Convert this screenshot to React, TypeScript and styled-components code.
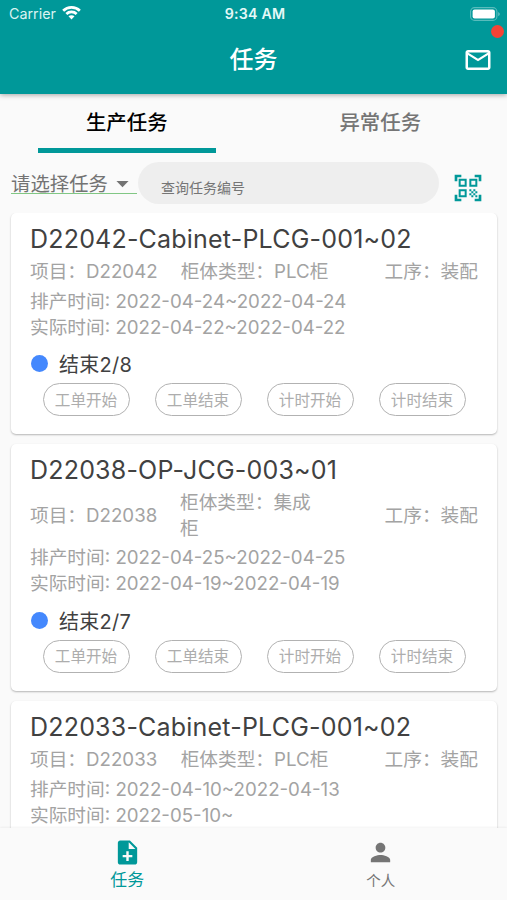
import React from "react";
import styled, { createGlobalStyle } from "styled-components";
import {
  MdArrowDropDown,
  MdMailOutline,
  MdNoteAdd,
  MdPerson,
  MdQrCodeScanner,
} from "react-icons/md";

const teal = "#009899";

const GlobalStyle = createGlobalStyle`
  * { box-sizing: border-box; }
  body {
    margin: 0;
    background: #fafafa;
    font-family: Inter, "Noto Sans CJK SC", sans-serif;
    color: #414141;
  }
  svg { display: block; flex: none; }
`;

const Screen = styled.div`
  width: 507px;
  height: 900px;
  display: flex;
  flex-direction: column;
  overflow: hidden;
  background: #fafafa;
  white-space: nowrap;
`;

const Header = styled.header`
  flex: none;
  height: 94px;
  background: ${teal};
  color: #fff;
  box-shadow: 0 1px 5px rgba(0, 0, 0, 0.35);
  z-index: 1;
`;

const StatusBar = styled.div`
  height: 27px;
  display: grid;
  grid-template-columns: 1fr auto 1fr;
  align-items: center;
  padding: 0 6px 0 9px;
`;

const Carrier = styled.div`
  display: flex;
  align-items: center;
  gap: 6px;
  font-size: 14.3px;
  color: #d9f3f2;
  svg { margin-bottom: 2px; }
`;

const Clock = styled.div`
  font-size: 14.2px;
  font-weight: 600;
  letter-spacing: 0.2px;
  color: #e4f8f7;
`;

const BatterySlot = styled.div`
  display: flex;
  justify-content: flex-end;
`;

const AppBar = styled.div`
  height: 65px;
  display: grid;
  grid-template-columns: 1fr auto 1fr;
  align-items: center;
  padding: 0 14px;
`;

const AppTitle = styled.h1`
  grid-column: 2;
  margin: 0;
  font-size: 24px;
  line-height: 36px;
  font-weight: 500;
`;

const MailButton = styled.button`
  position: relative;
  justify-self: end;
  padding: 0;
  border: 0;
  background: none;
  color: #fff;
`;

const Unread = styled.span`
  position: absolute;
  top: -20px;
  right: -11px;
  width: 13px;
  height: 13px;
  border-radius: 50%;
  background: #f44336;
`;

const Tabs = styled.nav`
  flex: none;
  height: 59px;
  display: grid;
  grid-template-columns: 1fr 1fr;
  justify-items: center;
`;

const Tab = styled.button<{ $active?: boolean }>`
  width: 178px;
  height: 59px;
  padding: 3px 0 0;
  border: 0;
  border-bottom: 5px solid ${(p) => (p.$active ? teal : "transparent")};
  background: none;
  font: 500 20.4px/30px Inter, "Noto Sans CJK SC", sans-serif;
  color: ${(p) => (p.$active ? "#000" : "#757575")};
`;

const Filters = styled.div`
  flex: none;
  height: 60px;
  display: flex;
  padding: 9px 20px 0 11px;
`;

const TaskSelect = styled.div`
  flex: none;
  width: 126px;
  height: 32px;
  display: flex;
  align-items: center;
  justify-content: space-between;
  padding-top: 12px;
  border-bottom: 1px solid #81c784;
  font-size: 19.4px;
  line-height: 20px;
  color: #737373;
  svg { margin: -5px 0; }
`;

const Search = styled.div`
  flex: none;
  width: 301px;
  height: 42px;
  margin-left: 1px;
  border-radius: 21px;
  background: #eee;
  padding: 9px 23px 0;
  font-size: 14px;
  line-height: 34px;
  color: #757575;
`;

const ScanButton = styled.button`
  margin: 9px 0 0 13px;
  padding: 0;
  border: 0;
  background: none;
  height: 33px;
  color: ${teal};
`;

const List = styled.main`
  flex: 1;
  min-height: 0;
  overflow: hidden;
  display: flex;
  flex-direction: column;
  gap: 10px;
  padding: 0 10px 0 11px;
`;

const Card = styled.article`
  flex: none;
  padding: 9px 19px 18px;
  background: #fff;
  border-radius: 5px;
  box-shadow: 0 1px 2px rgba(0, 0, 0, 0.28);
`;

const CardTitle = styled.h2`
  margin: 0 0 3px;
  font-size: 25px;
  line-height: 34px;
  font-weight: 400;
  letter-spacing: 0.2px;
`;

const InfoRow = styled.div`
  display: grid;
  grid-template-columns: 150px 149px 1fr;
  align-items: center;
  margin-bottom: 4px;
  font-size: 18.7px;
  line-height: 25.6px;
  color: #a3a3a3;
`;

const Info = styled.div<{ $align?: "center" | "right" }>`
  white-space: normal;
  justify-self: ${(p) => (p.$align === "right" ? "end" : p.$align === "center" ? "center" : "start")};
`;

const DateLine = styled.div`
  font-size: 18.7px;
  line-height: 26px;
  color: #a3a3a3;
`;

const Status = styled.div`
  height: 42.6px;
  padding-top: 3px;
  display: flex;
  align-items: center;
  gap: 11px;
  font-size: 20px;
  letter-spacing: 0.25px;
`;

const Dot = styled.span`
  width: 17px;
  height: 17px;
  margin: 1px 0 0 1px;
  border-radius: 50%;
  background: #4488fd;
`;

const Actions = styled.div`
  display: flex;
  justify-content: space-around;
`;

const Action = styled.button`
  width: 87px;
  height: 33px;
  padding: 2px 0 0;
  border: 1.5px solid #b2b2b2;
  border-radius: 17px;
  background: #fff;
  color: #adadad;
  font: 400 15.6px/24px Inter, "Noto Sans CJK SC", sans-serif;
`;

const BottomNav = styled.nav`
  flex: none;
  height: 72px;
  display: grid;
  grid-template-columns: 1fr 1fr;
  background: #fafafa;
  box-shadow: 0 -1px 2px rgba(0, 0, 0, 0.05);
  z-index: 1;
`;

const NavItem = styled.button<{ $active?: boolean }>`
  display: flex;
  flex-direction: column;
  align-items: center;
  padding: 10px 0 0 1px;
  border: 0;
  background: none;
  font: 400 ${(p) => (p.$active ? "17px/26px" : "14.5px/28px")} Inter, "Noto Sans CJK SC", sans-serif;
  color: ${(p) => (p.$active ? teal : "#757575")};
`;

const tasks = [
  {
    name: "D22042-Cabinet-PLCG-001~02",
    project: "D22042",
    type: "PLC柜",
    planned: "2022-04-24~2022-04-24",
    actual: "2022-04-22~2022-04-22",
    progress: "2/8",
  },
  {
    name: "D22038-OP-JCG-003~01",
    project: "D22038",
    type: "集成柜",
    planned: "2022-04-25~2022-04-25",
    actual: "2022-04-19~2022-04-19",
    progress: "2/7",
  },
  {
    name: "D22033-Cabinet-PLCG-001~02",
    project: "D22033",
    type: "PLC柜",
    planned: "2022-04-10~2022-04-13",
    actual: "2022-05-10~",
    progress: "",
  },
];

const actions = ["工单开始", "工单结束", "计时开始", "计时结束"];

const Wifi = () => (
  <svg width="19" height="14" viewBox="0 0 19 14" fill="#fff">
    <path d="M9.5 0C5.9 0 2.6 1.4.2 3.7l1.9 2A10.7 10.7 0 0 1 9.5 2.7a10.7 10.7 0 0 1 7.4 3l1.9-2A13.4 13.4 0 0 0 9.5 0Z" />
    <path d="M9.5 4.6a8.8 8.8 0 0 0-6.1 2.4l1.9 2a6.2 6.2 0 0 1 8.4 0l1.9-2a8.8 8.8 0 0 0-6.1-2.4Z" />
    <path d="M9.5 9.2c-1.2 0-2.2.4-3 1.1l3 3.2 3-3.2c-.8-.7-1.8-1.1-3-1.1Z" />
  </svg>
);

const Battery = () => (
  <svg width="31" height="14" viewBox="0 0 31 14">
    <rect x="0.6" y="0.6" width="26.3" height="12.8" rx="4" fill="none" stroke="#fff" strokeOpacity=".35" strokeWidth="1.1" />
    <rect x="2.6" y="2.4" width="22.3" height="9.2" rx="2" fill="#fff" />
    <path d="M28.3 5v4.2c1.9-.8 1.9-3.4 0-4.2Z" fill="#fff" fillOpacity=".45" />
  </svg>
);

export default function App() {
  return (
    <Screen>
      <GlobalStyle />
      <Header>
        <StatusBar>
          <Carrier>
            Carrier
            <Wifi />
          </Carrier>
          <Clock>9:34 AM</Clock>
          <BatterySlot>
            <Battery />
          </BatterySlot>
        </StatusBar>
        <AppBar>
          <AppTitle>任务</AppTitle>
          <MailButton aria-label="消息">
            <MdMailOutline size={30} />
            <Unread />
          </MailButton>
        </AppBar>
      </Header>
      <Tabs>
        <Tab $active>生产任务</Tab>
        <Tab>异常任务</Tab>
      </Tabs>
      <Filters>
        <TaskSelect>
          请选择任务
          <MdArrowDropDown size={29} />
        </TaskSelect>
        <Search>查询任务编号</Search>
        <ScanButton aria-label="扫码">
          <MdQrCodeScanner size={32} />
        </ScanButton>
      </Filters>
      <List>
        {tasks.map((t) => (
          <Card key={t.name}>
            <CardTitle>{t.name}</CardTitle>
            <InfoRow>
              <Info>项目：{t.project}</Info>
              <Info $align="center">柜体类型：{t.type}</Info>
              <Info $align="right">工序：装配</Info>
            </InfoRow>
            <DateLine>排产时间: {t.planned}</DateLine>
            <DateLine>实际时间: {t.actual}</DateLine>
            {t.progress && (
              <>
                <Status>
                  <Dot />
                  结束{t.progress}
                </Status>
                <Actions>
                  {actions.map((a) => (
                    <Action key={a}>{a}</Action>
                  ))}
                </Actions>
              </>
            )}
          </Card>
        ))}
      </List>
      <BottomNav>
        <NavItem $active>
          <MdNoteAdd size={29} />
          任务
        </NavItem>
        <NavItem>
          <MdPerson size={29} />
          个人
        </NavItem>
      </BottomNav>
    </Screen>
  );
}
